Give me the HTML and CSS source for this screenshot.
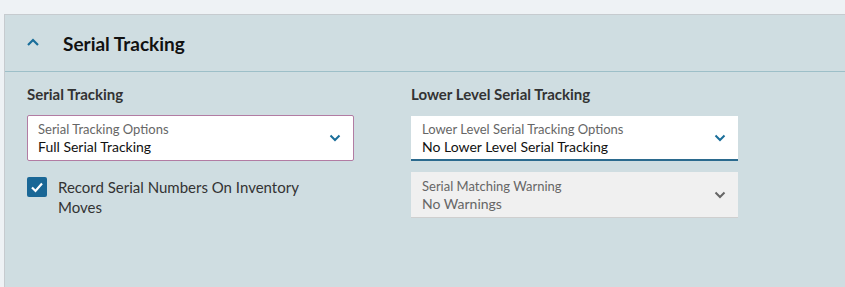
FILE: index.html
```html
<!DOCTYPE html>
<html lang="en">
<head>
    <meta charset="UTF-8">
    <title>Serial Tracking</title>
    <link rel="stylesheet" href="styles.css">
</head>
<body>
    <div class="panel">
        <div class="panel-header">
            <svg class="toggle" width="12" height="8" viewBox="0 0 12 8">
                <path d="M1 7 L6 2 L11 7" fill="none" stroke="#1a6e9a" stroke-width="2.2"/>
            </svg>
            <h2>Serial Tracking</h2>
        </div>

        <div class="panel-body">
            <div class="column">
                <h3>Serial Tracking</h3>
                <div class="select focused">
                    <div class="select-text">
                        <span class="select-label">Serial Tracking Options</span>
                        <span class="select-value">Full Serial Tracking</span>
                    </div>
                    <svg class="caret" width="12" height="8" viewBox="0 0 12 8">
                        <path d="M1.5 1.5 L6 6 L10.5 1.5" fill="none" stroke="#1a6e9a" stroke-width="2"/>
                    </svg>
                </div>
                <label class="check">
                    <span class="box">
                        <svg width="14" height="12" viewBox="0 0 14 12">
                            <path d="M2 6.5 L5.5 10 L12 2.5" fill="none" stroke="#fff" stroke-width="2.2"/>
                        </svg>
                    </span>
                    <span class="check-text">Record Serial Numbers On Inventory Moves</span>
                </label>
            </div>

            <div class="column">
                <h3>Lower Level Serial Tracking</h3>
                <div class="select underlined">
                    <div class="select-text">
                        <span class="select-label">Lower Level Serial Tracking Options</span>
                        <span class="select-value">No Lower Level Serial Tracking</span>
                    </div>
                    <svg class="caret" width="12" height="8" viewBox="0 0 12 8">
                        <path d="M1.5 1.5 L6 6 L10.5 1.5" fill="none" stroke="#1a6e9a" stroke-width="2"/>
                    </svg>
                </div>
                <div class="select disabled">
                    <div class="select-text">
                        <span class="select-label">Serial Matching Warning</span>
                        <span class="select-value">No Warnings</span>
                    </div>
                    <svg class="caret" width="12" height="8" viewBox="0 0 12 8">
                        <path d="M1.5 1.5 L6 6 L10.5 1.5" fill="none" stroke="#666" stroke-width="2"/>
                    </svg>
                </div>
            </div>
        </div>
    </div>
</body>
</html>
```

FILE: styles.css
```css
* {
    margin: 0;
    padding: 0;
    box-sizing: border-box;
}

body {
    font-family: 'Lato', 'Open Sans', sans-serif;
    background: #eef2f5;
    padding: 14px 0 0 4px;
    height: 100vh;
    overflow: hidden;
}

.panel {
    background: #cfdde1;
    border-left: 1px solid #c6cbcf;
    border-top: 1px solid #c6cbcf;
    height: 100%;
}

.panel-header {
    display: flex;
    align-items: center;
    height: 57px;
    padding-left: 22px;
    border-bottom: 1px solid #9dbfc8;
}

.toggle {
    margin-right: 24px;
    margin-top: -2px;
}

.panel-header h2 {
    font-size: 19px;
    font-weight: 700;
    color: #111;
}

.panel-body {
    display: flex;
    padding: 12px 0 0 22px;
    gap: 57px;
}

.column {
    width: 327px;
    display: flex;
    flex-direction: column;
}

h3 {
    font-size: 15px;
    font-weight: 700;
    color: #333;
    line-height: 20px;
    margin-bottom: 11px;
}

.select {
    display: flex;
    align-items: center;
    justify-content: space-between;
    height: 46px;
    padding: 0 12px 0 11px;
    background: #fff;
}

.select.focused {
    border: 1px solid #b27ca3;
    border-radius: 2px;
    padding-left: 10px;
}

.select.underlined {
    border-bottom: 2px solid #2b6a8e;
    margin-top: 1px;
    height: 45px;
}

.select.disabled {
    background: #f0f0f0;
    border-bottom: 1px solid #cfcfcf;
    margin-top: 11px;
}

.select-text {
    display: flex;
    flex-direction: column;
    line-height: 18px;
}

.select-label {
    font-size: 13px;
    color: #666;
}

.select-value {
    font-size: 14px;
    color: #111;
}

.disabled .select-value {
    color: #666;
}

.check {
    display: flex;
    align-items: flex-start;
    margin-top: 16px;
    gap: 11px;
}

.box {
    width: 20px;
    height: 20px;
    background: #1a6796;
    border-radius: 2px;
    display: flex;
    align-items: center;
    justify-content: center;
    flex-shrink: 0;
}

.check-text {
    font-size: 15px;
    color: #333;
    line-height: 20px;
    width: 250px;
}
```
